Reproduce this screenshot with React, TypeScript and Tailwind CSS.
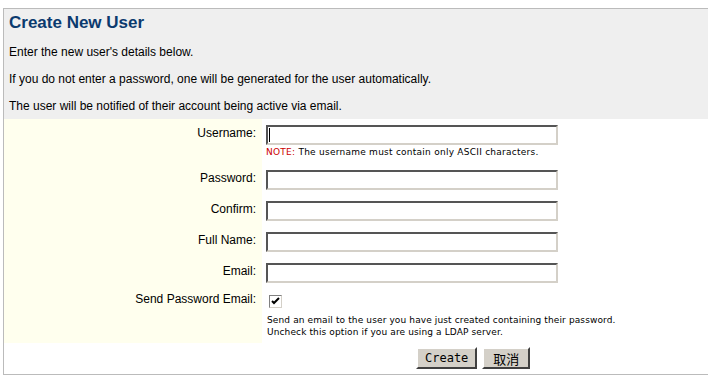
import React from "react";

const fields = [
    { label: "Username:", note: true, caret: true },
    { label: "Password:" },
    { label: "Confirm:" },
    { label: "Full Name:" },
    { label: "Email:" },
];

function TextBox({ caret }: { caret?: boolean }) {
    return (
        <div className="relative w-[292px] h-[20px] bg-white border-2 border-t-[#555] border-l-[#555] border-b-[#d4d0c8] border-r-[#d4d0c8]">
            {caret && <span className="absolute left-[1px] top-[1px] w-px h-[14px] bg-black" />}
        </div>
    );
}

function Button({ children, mono }: { children: React.ReactNode; mono?: boolean }) {
    return (
        <button
            className={
                "h-[22px] bg-[#d4d0c8] text-black leading-none border-2 border-t-white border-l-white border-b-[#404040] border-r-[#404040] " +
                (mono ? "px-[7px] text-[12px] font-['DejaVu_Sans_Mono',monospace]" : "px-[9px] text-[13px] font-['Noto_Sans_CJK_SC',sans-serif]")
            }
        >
            {children}
        </button>
    );
}

export default function App() {
    return (
        <div className="w-[708px] h-[376px] bg-white overflow-hidden font-['Liberation_Sans',Arial,sans-serif] text-black">
            <div className="mt-2 ml-[3px] w-[710px] border border-r-0 border-[#bbb]">
                {/* header */}
                <div className="bg-[#efefef] pl-[5px] pb-[2px]">
                    <h1 className="h-[30px] pt-[4px] text-[17px] leading-[20px] font-bold text-[#0b3a6e]">
                        Create New User
                    </h1>
                    <p className="h-[27px] text-[12px] leading-[27px]">Enter the new user's details below.</p>
                    <p className="h-[27px] text-[12px] leading-[27px]">
                        If you do not enter a password, one will be generated for the user automatically.
                    </p>
                    <p className="h-[24px] text-[12px] leading-[27px]">
                        The user will be notified of their account being active via email.
                    </p>
                </div>

                {/* form rows */}
                {fields.map((f) => (
                    <div key={f.label} className="flex">
                        <div className="w-[258px] shrink-0 bg-[#ffffee] text-right pr-[6px] pt-[6px] text-[12px] leading-4">
                            {f.label}
                        </div>
                        <div className="pl-[4px] pt-[6px] pb-[5px]">
                            <TextBox caret={f.caret} />
                            {f.note && (
                                <div className="h-[14px] pt-[1px] font-['DejaVu_Sans',Verdana,sans-serif] text-[9px] leading-[13px] tracking-[0.25px]">
                                    <span className="text-[#cc0000]">NOTE:</span> The username must contain only ASCII characters.
                                </div>
                            )}
                        </div>
                    </div>
                ))}

                <div className="flex">
                    <div className="w-[258px] shrink-0 bg-[#ffffee] text-right pr-[6px] pt-[4px] text-[12px] leading-[14px]">
                        Send Password Email:
                    </div>
                    <div className="pl-[5px] pt-[7px] pb-[5px]">
                        <div className="ml-[2px] w-[13px] h-[13px] bg-white border border-t-[#808080] border-l-[#808080] border-b-[#d4d0c8] border-r-[#d4d0c8] flex items-center justify-center">
                            <svg width="9" height="9" viewBox="0 0 9 9">
                                <path d="M1 4 L3 6 L8 1" stroke="#000" strokeWidth="2" fill="none" />
                            </svg>
                        </div>
                        <div className="mt-[6px] font-['DejaVu_Sans',Verdana,sans-serif] text-[9px] leading-[12px] tracking-[0.12px]">
                            <div>Send an email to the user you have just created containing their password.</div>
                            <div>Uncheck this option if you are using a LDAP server.</div>
                        </div>
                    </div>
                </div>

                {/* buttons */}
                <div className="flex gap-[5px] pl-[412px] pt-[4px] pb-[5px]">
                    <Button mono>Create</Button>
                    <Button>取消</Button>
                </div>
            </div>
        </div>
    );
}
